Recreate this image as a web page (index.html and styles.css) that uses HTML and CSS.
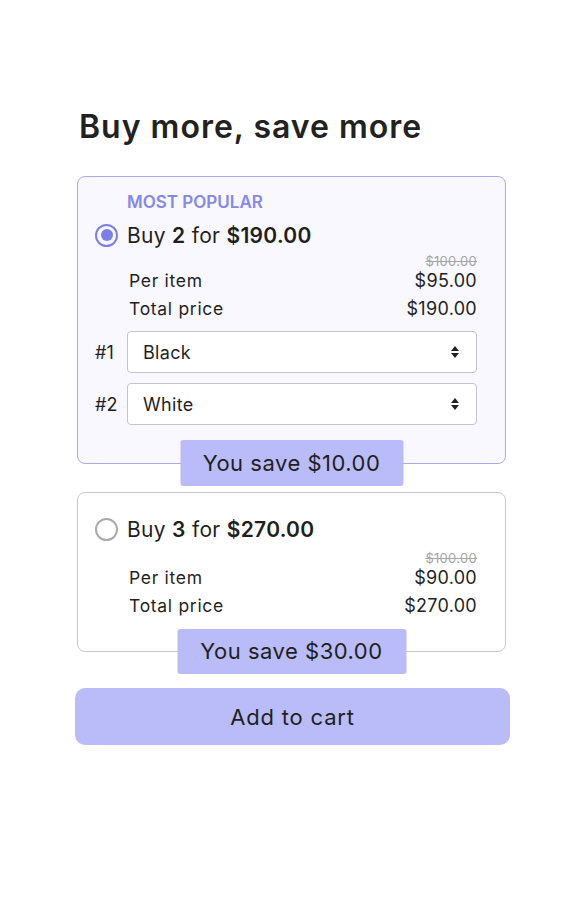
FILE: index.html
```html
<!DOCTYPE html>
<html lang="en">
  <head>
    <meta charset="UTF-8" />
    <meta name="viewport" content="width=device-width, initial-scale=1.0" />
    <title>Buy more, save more</title>
    <link rel="stylesheet" href="styles.css">
  </head>
  <body>
    <div class="bundle">
      <h1>Buy more, save more</h1>

      <div class="offer offer-active">
        <div class="tag">MOST POPULAR</div>
        <div class="offer-head">
          <span class="radio radio-on"></span>
          <span class="offer-title">Buy <b>2</b> for <b>$190.00</b></span>
        </div>
        <div class="prices">
          <div class="price-row">
            <span></span>
            <span class="old">$100.00</span>
          </div>
          <div class="price-row">
            <span>Per item</span>
            <span class="val">$95.00</span>
          </div>
          <div class="price-row">
            <span>Total price</span>
            <span class="val">$190.00</span>
          </div>
        </div>
        <div class="variant">
          <span class="variant-no">#1</span>
          <div class="select-wrap">
            <select>
              <option>Black</option>
              <option>White</option>
            </select>
            <svg class="arrows" width="10" height="14" viewBox="0 0 10 14">
              <path d="M5 1 L9 6 L1 6 Z M1 8 L9 8 L5 13 Z" fill="#222" />
            </svg>
          </div>
        </div>
        <div class="variant">
          <span class="variant-no">#2</span>
          <div class="select-wrap">
            <select>
              <option>White</option>
              <option>Black</option>
            </select>
            <svg class="arrows" width="10" height="14" viewBox="0 0 10 14">
              <path d="M5 1 L9 6 L1 6 Z M1 8 L9 8 L5 13 Z" fill="#222" />
            </svg>
          </div>
        </div>
        <div class="save">You save $10.00</div>
      </div>

      <div class="offer">
        <div class="offer-head">
          <span class="radio"></span>
          <span class="offer-title">Buy <b>3</b> for <b>$270.00</b></span>
        </div>
        <div class="prices">
          <div class="price-row">
            <span></span>
            <span class="old">$100.00</span>
          </div>
          <div class="price-row">
            <span>Per item</span>
            <span class="val">$90.00</span>
          </div>
          <div class="price-row">
            <span>Total price</span>
            <span class="val">$270.00</span>
          </div>
        </div>
        <div class="save save-wide">You save $30.00</div>
      </div>

      <button type="button" class="add-btn">Add to cart</button>
    </div>
  </body>
</html>
```

FILE: styles.css
```css
body {
  font-family: "Inter", "Open Sans", sans-serif;
  margin: 0;
  background-color: #fff;
  color: #1f1f1f;
}
.bundle {
  width: 435px;
  padding: 108px 0 0 75px;
}
h1 {
  font-size: 32px;
  font-weight: 600;
  letter-spacing: 1px;
  color: #222;
  margin: 0 0 30px 4px;
  line-height: 38px;
}
.offer {
  position: relative;
  margin: 0 4px 28px 2px;
  border: 1px solid #c9c9c9;
  border-radius: 8px;
  background: #fff;
  padding: 17px 28px 31px 17px;
}
.offer-active {
  border-color: #a9abe8;
  background: #f8f8fe;
  padding-top: 14px;
  padding-bottom: 38px;
}
.tag {
  margin-left: 32px;
  font-size: 17px;
  font-weight: 600;
  color: #8488e6;
  line-height: 22px;
}
.offer-head {
  display: flex;
  align-items: center;
  gap: 9px;
  height: 38px;
}
.offer-active .offer-head {
  margin-top: 3px;
}
.radio {
  width: 23px;
  height: 23px;
  box-sizing: border-box;
  border: 2.5px solid #aaa;
  border-radius: 50%;
  display: flex;
  align-items: center;
  justify-content: center;
}
.radio-on {
  border-color: #7b80e8;
}
.radio-on::after {
  content: "";
  width: 12px;
  height: 12px;
  border-radius: 50%;
  background: #7b80e8;
}
.offer-title {
  font-size: 21px;
  font-weight: 400;
  letter-spacing: 0.3px;
}
.offer-title b {
  font-weight: 600;
}
.prices {
  margin: 2px 0 0 34px;
}
.offer-active .prices {
  margin-top: -1px;
}
.price-row {
  display: flex;
  justify-content: space-between;
  align-items: baseline;
  font-size: 17.5px;
  letter-spacing: 0.7px;
  line-height: 28px;
}
.price-row:first-child {
  line-height: 16px;
  margin-bottom: -2px;
}
.offer-active .price-row:nth-child(2) {
  margin-top: -1px;
}
.old {
  font-size: 13px;
  letter-spacing: 0.3px;
  color: #a5a5a5;
  text-decoration: line-through;
}
.val {
  font-size: 18px;
  letter-spacing: 0.3px;
}
.variant {
  display: flex;
  align-items: center;
  margin-top: 8px;
}
.variant + .variant {
  margin-top: 10px;
}
.variant-no {
  width: 32px;
  font-size: 18px;
}
.select-wrap {
  position: relative;
  flex: 1;
}
select {
  appearance: none;
  width: 100%;
  height: 42px;
  border: 1px solid #c4c4c4;
  border-radius: 4px;
  background: #fff;
  font-family: inherit;
  font-size: 18px;
  letter-spacing: 0.3px;
  color: #1f1f1f;
  padding: 0 15px;
  margin: 0;
}
.arrows {
  position: absolute;
  right: 17px;
  top: 14px;
  pointer-events: none;
}
.save {
  position: absolute;
  left: 50%;
  bottom: -23px;
  transform: translateX(-50%);
  width: 223px;
  height: 46px;
  line-height: 46px;
  text-align: center;
  background: #b9bcf9;
  border-radius: 3px;
  font-size: 22px;
  letter-spacing: 0.5px;
  color: #1f1f1f;
}
.save-wide {
  width: 229px;
  height: 45px;
  line-height: 45px;
}
.add-btn {
  display: block;
  width: 100%;
  height: 57px;
  margin-top: 36px;
  border: none;
  border-radius: 10px;
  background: #b9bcf9;
  font-family: inherit;
  font-size: 22px;
  letter-spacing: 0.8px;
  color: #1f1f1f;
  cursor: pointer;
}
```
